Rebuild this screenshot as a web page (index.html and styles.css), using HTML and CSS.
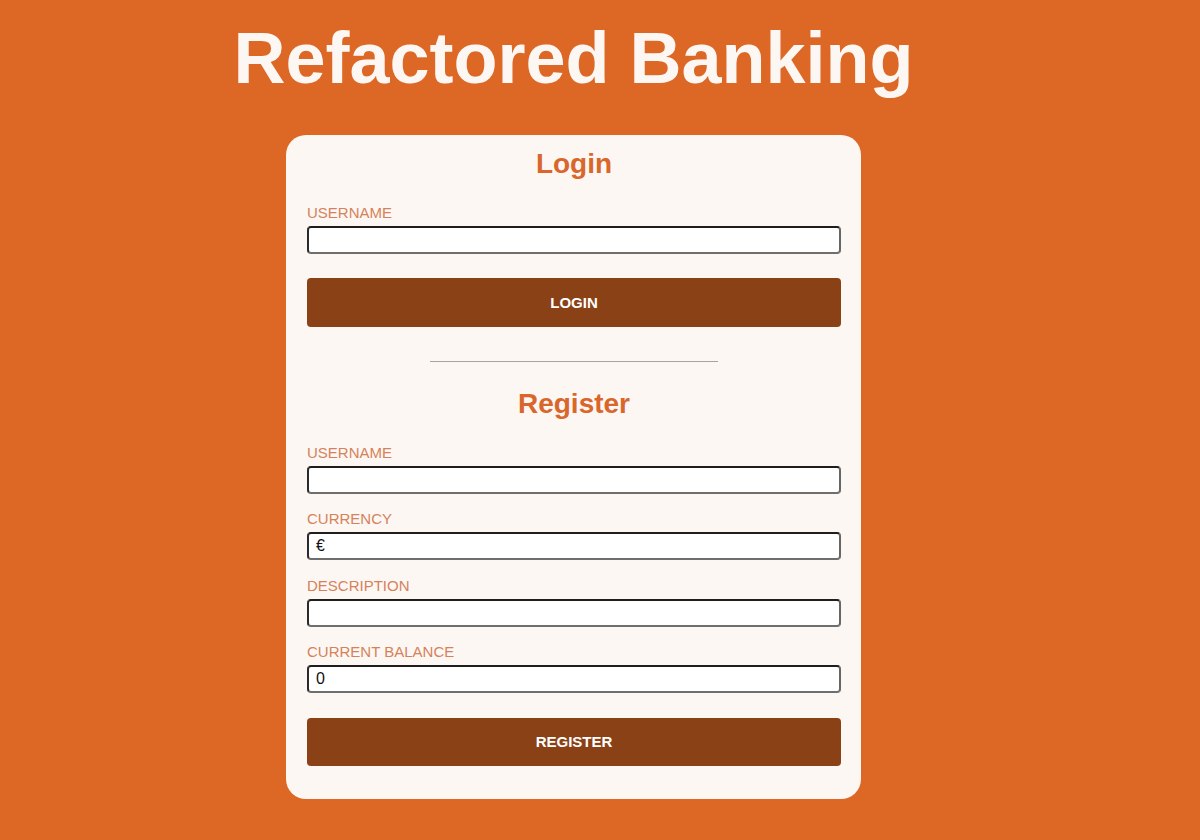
FILE: index.html
```html
<!DOCTYPE html>
<html lang="en">
<head>
<meta charset="utf-8">
<title>Refactored Banking</title>
<link rel="stylesheet" href="styles.css">
</head>
<body>
<div class="page">
  <h1 class="title">Refactored Banking</h1>
  <div class="card">
    <form class="form">
      <h2 class="heading">Login</h2>
      <label class="label" for="login-user">USERNAME</label>
      <input class="field" id="login-user" type="text">
      <button class="btn" type="button">LOGIN</button>
    </form>
    <hr class="divider">
    <form class="form">
      <h2 class="heading">Register</h2>
      <label class="label" for="reg-user">USERNAME</label>
      <input class="field" id="reg-user" type="text">
      <label class="label label-next" for="reg-cur">CURRENCY</label>
      <input class="field" id="reg-cur" type="text" value="€">
      <label class="label label-next" for="reg-desc">DESCRIPTION</label>
      <input class="field" id="reg-desc" type="text">
      <label class="label label-next" for="reg-bal">CURRENT BALANCE</label>
      <input class="field" id="reg-bal" type="text" value="0">
      <button class="btn btn-register" type="button">REGISTER</button>
    </form>
  </div>
</div>
</body>
</html>
```

FILE: styles.css
```css
html, body {
  margin: 0;
  padding: 0;
}
body {
  background: #dd6724;
  font-family: "Liberation Sans", Arial, sans-serif;
  min-height: 840px;
}
.page {
  width: 1147px;
  display: flex;
  flex-direction: column;
  align-items: center;
  padding-top: 17px;
}
.title {
  margin: 0;
  font-size: 72px;
  line-height: 83px;
  font-weight: bold;
  color: #fdf7f4;
}
.card {
  margin-top: 35px;
  width: 575px;
  box-sizing: border-box;
  background: #fdf7f4;
  border-radius: 20px;
  padding: 13px 20px 33px 21px;
  display: flex;
  flex-direction: column;
  align-items: stretch;
}
.form {
  display: flex;
  flex-direction: column;
  margin: 0;
}
.heading {
  margin: 0 0 24px;
  text-align: center;
  font-size: 28px;
  line-height: 32px;
  font-weight: bold;
  color: #d9672b;
}
.label {
  font-size: 15px;
  line-height: 17px;
  color: #d5825a;
  margin-bottom: 5px;
}
.label-next {
  margin-top: 16.3px;
}
.field {
  box-sizing: border-box;
  width: 534px;
  height: 28px;
  margin: 0;
  padding: 1px 7px;
  border: 2px solid;
  border-color: #1e1e1e #666 #6e6e6e #2a2a2a;
  border-radius: 4px;
  background: #fff;
  font-family: "Liberation Sans", Arial, sans-serif;
  font-size: 16px;
  color: #111;
}
.btn {
  margin-top: 24px;
  width: 534px;
  height: 49px;
  border: none;
  border-radius: 4px;
  background: #8b4116;
  color: #fff;
  font-family: "Liberation Sans", Arial, sans-serif;
  font-size: 15px;
  font-weight: bold;
}
.btn-register {
  margin-top: 25px;
  height: 48px;
}
.divider {
  width: 288px;
  margin: 34px auto 26px;
  border: none;
  border-top: 1px solid #a8a39f;
  height: 0;
}
```
